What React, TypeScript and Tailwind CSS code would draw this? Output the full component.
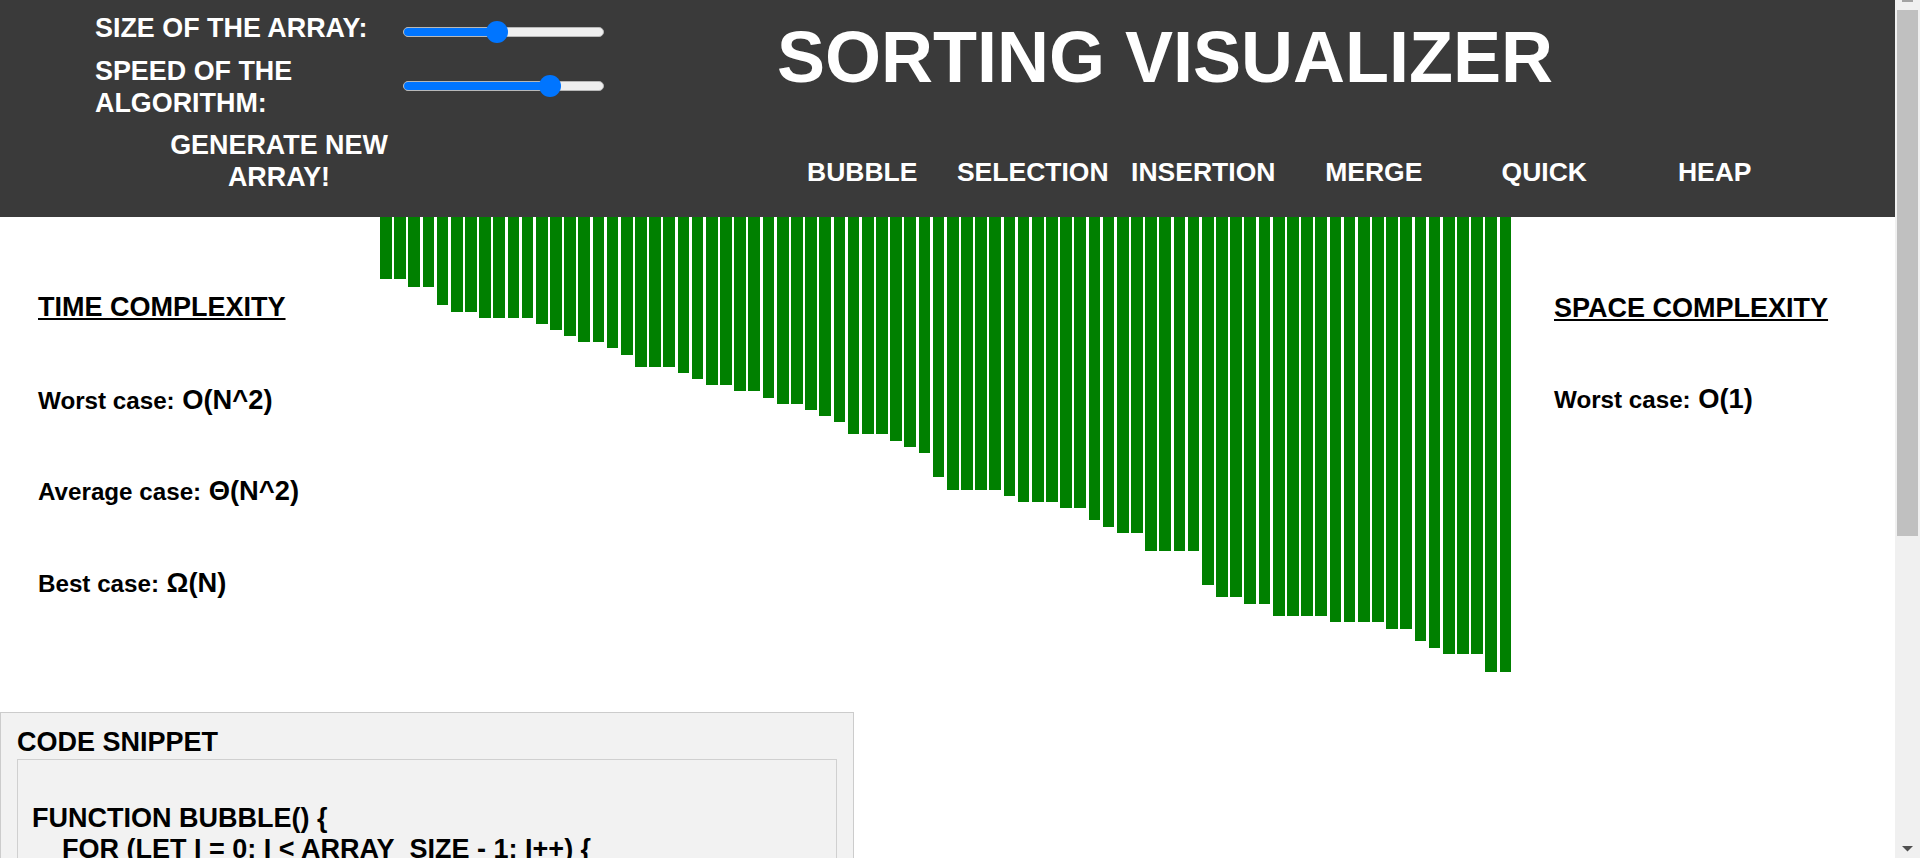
import React from 'react';

const heights = [
  62, 62, 70, 70, 88, 95, 95, 101, 101, 101,
  101, 107, 113, 119, 125, 125, 131, 138, 150, 150,
  150, 156, 162, 168, 168, 174, 174, 181, 187, 187,
  193, 199, 205, 217, 217, 217, 224, 230, 236, 260,
  273, 273, 273, 273, 279, 285, 285, 285, 291, 291,
  303, 310, 316, 316, 334, 334, 334, 334, 368, 380,
  380, 387, 387, 399, 399, 399, 399, 405, 405, 405,
  405, 412, 412, 424, 431, 437, 437, 437, 455, 455,
];

const algorithms = ['Bubble', 'Selection', 'Insertion', 'Merge', 'Quick', 'Heap'];

const code = `
function bubble() {
    for (let i = 0; i < array_size - 1; i++) {
        for (let j = 0; j < array_size - i - 1; j++) {
            div_update(divs[j], div_sizes[j], "yellow");
            if (div_sizes[j] > div_sizes[j + 1]) {
                div_update(divs[j], div_sizes[j], "red");
                div_update(divs[j + 1], div_sizes[j + 1], "red");
                var temp = div_sizes[j];
                div_sizes[j] = div_sizes[j + 1];
                div_sizes[j + 1] = temp;
                div_update(divs[j], div_sizes[j], "red");
                div_update(divs[j + 1], div_sizes[j + 1], "red");
            }
            div_update(divs[j], div_sizes[j], "blue");
        }
        div_update(divs[j], div_sizes[j], "green");
    }
    div_update(divs[0], div_sizes[0], "green");
    enable_buttons();
}
`;

const Slider: React.FC<{ thumb: number; className?: string }> = ({ thumb, className }) => (
  <div className={`relative flex h-[22px] w-[201px] shrink-0 items-center ${className ?? ''}`}>
    <div className="flex h-[10px] w-full overflow-hidden rounded-full border border-[#b8b8b8] bg-[#efefef]">
      <div className="h-full bg-[#0075ff]" style={{ width: thumb + 11 }} />
    </div>
    <div className="absolute top-0 size-[22px] rounded-full bg-[#0075ff]" style={{ left: thumb }} />
  </div>
);

const CaseRow: React.FC<{ label: string; value: string; className?: string }> = ({ label, value, className }) => (
  <div className={`text-[27.3px] leading-[31px] ${className ?? ''}`}>
    <span className="text-[24.2px] leading-none">{label}</span> {value}
  </div>
);

export default function App() {
  return (
    <div className="flex h-[858px] w-full overflow-hidden bg-white font-['Liberation_Sans',Arial,sans-serif] font-bold text-black">
      <div className="flex min-w-0 flex-1 flex-col">
        {/* header */}
        <header className="flex h-[217px] shrink-0 bg-[#3a3a3a] text-white">
          <div className="w-[777px] shrink-0 pl-[95px] pt-[12px] text-[26.9px] leading-[32.5px]">
            <div className="flex items-start">
              <span className="w-[308px] shrink-0">SIZE OF THE ARRAY:</span>
              <div className="mt-[9px]">
                <Slider thumb={83} />
              </div>
            </div>
            <div className="mt-[10px] flex items-center">
              <span className="w-[308px] shrink-0">SPEED OF THE ALGORITHM:</span>
              <Slider thumb={136} className="-mt-[3px]" />
            </div>
            <button className="ml-[54px] mt-[9px] block w-[260px] cursor-pointer text-center">
              GENERATE NEW ARRAY!
            </button>
          </div>
          <div className="flex flex-1 flex-col">
            <h1 className="mt-[21px] text-[72px] leading-none">SORTING VISUALIZER</h1>
            <nav className="mt-[66px] flex">
              {algorithms.map((a) => (
                <button key={a} className="w-[170.5px] cursor-pointer text-center text-[26.5px] uppercase leading-none">
                  {a}
                </button>
              ))}
            </nav>
          </div>
        </header>

        {/* complexity + bars */}
        <main className="flex h-[495px] shrink-0">
          <div className="w-[380px] shrink-0 pl-[38px] pt-[75px]">
            <h2 className="text-[27px] leading-[31px] underline">TIME COMPLEXITY</h2>
            <CaseRow className="mt-[61px]" label="Worst case:" value="O(N^2)" />
            <CaseRow className="mt-[60px]" label="Average case:" value="Θ(N^2)" />
            <CaseRow className="mt-[61px]" label="Best case:" value="Ω(N)" />
          </div>
          <div className="flex w-[1134px] shrink-0 items-start gap-[2.49px]">
            {heights.map((h, i) => (
              <div key={i} className="w-[11.7px] shrink-0 bg-[#008000]" style={{ height: h }} />
            ))}
          </div>
          <div className="flex-1 pl-[40px] pt-[76px]">
            <h2 className="text-[27px] leading-[31px] underline">SPACE COMPLEXITY</h2>
            <CaseRow className="mt-[59px]" label="Worst case:" value="O(1)" />
          </div>
        </main>

        {/* code snippet */}
        <section className="w-[854px] shrink-0 border border-[#cccccc] bg-[#f2f2f2] px-[16px] pb-[16px] pt-[14px]">
          <h3 className="text-[27px] leading-[31px]">CODE SNIPPET</h3>
          <pre className="mt-[1px] whitespace-pre border border-[#d0d0d0] bg-[#f2f2f2] pb-[12px] pl-[14px] pt-[12px] font-['Liberation_Sans',Arial,sans-serif] text-[27px] uppercase leading-[31px]">
            {code}
          </pre>
        </section>
      </div>

      {/* scrollbar */}
      <div className="flex w-[25px] shrink-0 flex-col items-center bg-[#f0f0f0]">
        <div className="h-[2px] w-[11px] bg-[#a3a3a3]" />
        <div className="mt-[8px] h-[526px] w-[21px] bg-[#c0c0c0]" />
        <div className="flex-1" />
        <svg className="mb-[6px]" width="11" height="6" viewBox="0 0 11 6">
          <path d="M0 0 H11 L5.5 5.5 Z" fill="#505050" />
        </svg>
      </div>
    </div>
  );
}
